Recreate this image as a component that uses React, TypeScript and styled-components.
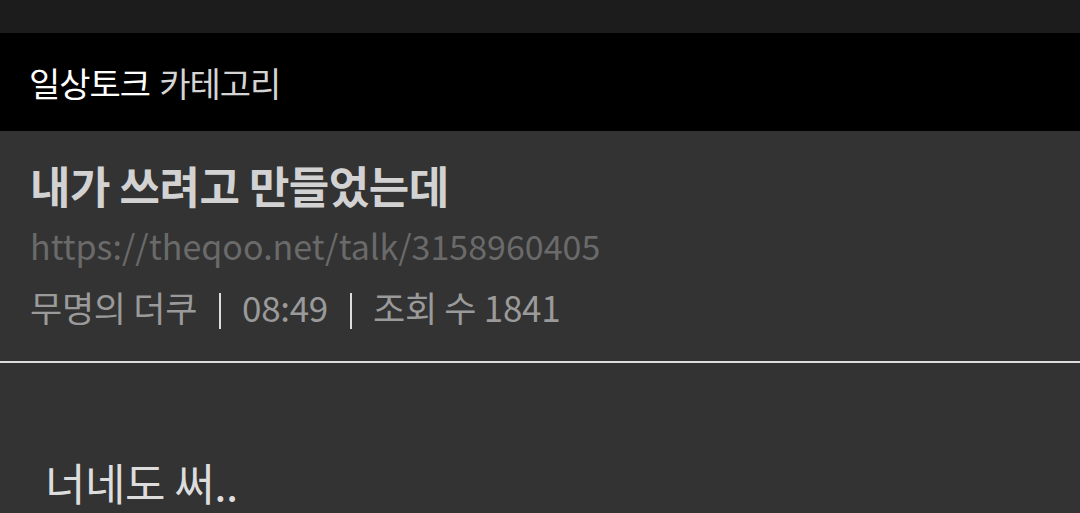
import styled, { createGlobalStyle } from "styled-components";

const GlobalStyle = createGlobalStyle`
    html, body {
        margin: 0;
        padding: 0;
        background: #333333;
        font-family: "Noto Sans CJK KR", "Noto Sans", sans-serif;
    }
`;

const Page = styled.div`
    width: 100%;
    min-height: 513px;
    background: #333333;
`;

const StatusBar = styled.div`
    height: 33px;
    background: #1c1c1c;
`;

const CategoryBar = styled.header`
    height: 98px;
    background: #000000;
    display: flex;
    align-items: center;
    padding-left: 29px;
    font-size: 34px;
    letter-spacing: -1px;
`;

const CategoryName = styled.span<{ $muted?: boolean }>`
    color: ${(p) => (p.$muted ? "#d4d4d4" : "#ffffff")};
    font-weight: 400;
    margin-right: 9px;
`;

const PostHead = styled.section`
    padding: 28px 30px 28px;
    border-bottom: 2px solid #dddddd;
    display: flex;
    flex-direction: column;
    gap: 9px;
`;

const Title = styled.h1`
    margin: 0;
    font-size: 44px;
    line-height: 52px;
    font-weight: 700;
    color: #d2d2d2;
    letter-spacing: -0.5px;
`;

const Url = styled.div`
    font-size: 34px;
    line-height: 52px;
    color: #6a6a6a;
`;

const Meta = styled.div`
    display: flex;
    align-items: center;
    font-size: 35px;
    line-height: 52px;
    color: #9a9a9a;
    letter-spacing: -0.3px;
`;

const Divider = styled.span`
    display: inline-block;
    width: 2px;
    height: 36px;
    background: #dddddd;
    margin: 8px 21px 0 22px;
`;

const Body = styled.article`
    padding: 93px 45px 0;
    font-size: 44px;
    line-height: 52px;
    color: #dddddd;
    letter-spacing: -0.5px;
`;

export default function App() {
    return (
        <>
            <GlobalStyle />
            <Page>
                <StatusBar />
                <CategoryBar>
                    <CategoryName>일상토크</CategoryName>
                    <CategoryName $muted>카테고리</CategoryName>
                </CategoryBar>
                <PostHead>
                    <Title>내가 쓰려고 만들었는데</Title>
                    <Url>https://theqoo.net/talk/3158960405</Url>
                    <Meta>
                        <span>무명의 더쿠</span>
                        <Divider />
                        <span>08:49</span>
                        <Divider />
                        <span>조회 수 1841</span>
                    </Meta>
                </PostHead>
                <Body>너네도 써..</Body>
            </Page>
        </>
    );
}
